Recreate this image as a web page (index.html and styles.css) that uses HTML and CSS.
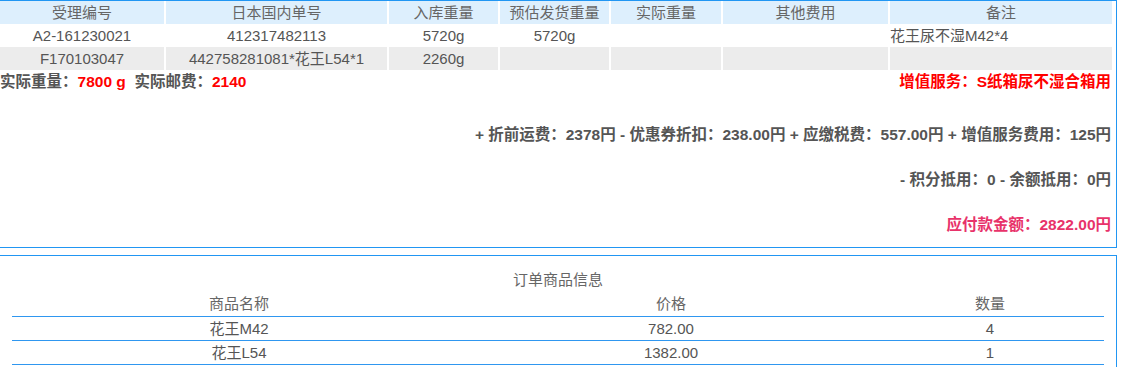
FILE: index.html
```html
<!DOCTYPE html>
<html lang="zh-CN">
<head>
<meta charset="utf-8">
<title>订单详情</title>
<link rel="stylesheet" href="styles.css">
</head>
<body>
<section class="panel panel-order">
  <div class="grid">
    <div class="cell head">受理编号</div>
    <div class="cell head">日本国内单号</div>
    <div class="cell head">入库重量</div>
    <div class="cell head">预估发货重量</div>
    <div class="cell head">实际重量</div>
    <div class="cell head">其他费用</div>
    <div class="cell head">备注</div>

    <div class="cell">A2-161230021</div>
    <div class="cell">412317482113</div>
    <div class="cell">5720g</div>
    <div class="cell">5720g</div>
    <div class="cell"></div>
    <div class="cell"></div>
    <div class="cell left">花王尿不湿M42*4</div>

    <div class="cell alt">F170103047</div>
    <div class="cell alt">442758281081*花王L54*1</div>
    <div class="cell alt">2260g</div>
    <div class="cell alt"></div>
    <div class="cell alt"></div>
    <div class="cell alt"></div>
    <div class="cell alt left"></div>
  </div>

  <div class="summary">
    <span>实际重量：<em class="red">7800 g</em>&nbsp; 实际邮费：<em class="red">2140</em></span>
    <span class="red">增值服务：S纸箱尿不湿合箱用</span>
  </div>

  <p class="cost first">+ 折前运费：2378円 - 优惠券折扣：238.00円 + 应缴税费：557.00円 + 增值服务费用：125円</p>
  <p class="cost">- 积分抵用：0 - 余额抵用：0円</p>
  <p class="cost total">应付款金额：2822.00円</p>
</section>

<section class="panel panel-goods">
  <div class="goods-title">订单商品信息</div>
  <table class="goods">
    <colgroup>
      <col class="c-name">
      <col class="c-price">
      <col class="c-qty">
    </colgroup>
    <thead>
      <tr><th>商品名称</th><th>价格</th><th>数量</th></tr>
    </thead>
    <tbody>
      <tr><td>花王M42</td><td>782.00</td><td>4</td></tr>
      <tr><td>花王L54</td><td>1382.00</td><td>1</td></tr>
    </tbody>
  </table>
</section>
</body>
</html>
```

FILE: styles.css
```css
html, body {
  margin: 0;
  padding: 0;
  background: #fff;
}
body {
  font-family: "Liberation Sans", "Noto Sans CJK SC", sans-serif;
  font-size: 15px;
  color: #555;
  overflow: hidden;
}
.panel {
  box-sizing: border-box;
  width: 1118px;
  margin-left: -1px;
  border: 1px solid #2196f3;
  background: #fff;
}
.panel-order {
  padding: 0 4px 11px 0;
}
.grid {
  display: grid;
  grid-template-columns: 164px 221px 109px 109px 110px 165px 222px;
  column-gap: 2px;
  grid-auto-rows: 23px;
}
.cell {
  line-height: 23px;
  text-align: center;
  white-space: nowrap;
  overflow: hidden;
}
.cell.head {
  background: #ddeffd;
  color: #666;
}
.cell.alt {
  background: #ececec;
}
.cell.left {
  text-align: left;
}
.summary {
  display: flex;
  justify-content: space-between;
  height: 22px;
  line-height: 22px;
  margin-top: 1px;
  font-size: 15.5px;
  font-weight: bold;
  padding-right: 1px;
}
.summary em {
  font-style: normal;
}
.red {
  color: #ff0000;
}
.cost {
  margin: 23px 0 0;
  line-height: 22px;
  text-align: right;
  font-size: 15.5px;
  font-weight: bold;
  padding-right: 1px;
}
.cost.first {
  margin-top: 31px;
}
.cost.total {
  color: #e8336a;
}
.panel-goods {
  margin-top: 7px;
  padding: 12px 12px 0 12px;
  height: 112px;
  border-bottom: none;
}
.goods-title {
  text-align: center;
  line-height: 24px;
  color: #666;
}
.goods {
  width: 1092px;
  border-collapse: collapse;
  table-layout: fixed;
}
.c-name { width: 454px; }
.c-price { width: 410px; }
.c-qty { width: 228px; }
.goods th,
.goods td {
  padding: 0;
  text-align: center;
  font-weight: normal;
  border-bottom: 1px solid #2f97f0;
}
.goods th {
  height: 24px;
  line-height: 24px;
  color: #666;
}
.goods td {
  height: 23px;
  line-height: 23px;
}
```
